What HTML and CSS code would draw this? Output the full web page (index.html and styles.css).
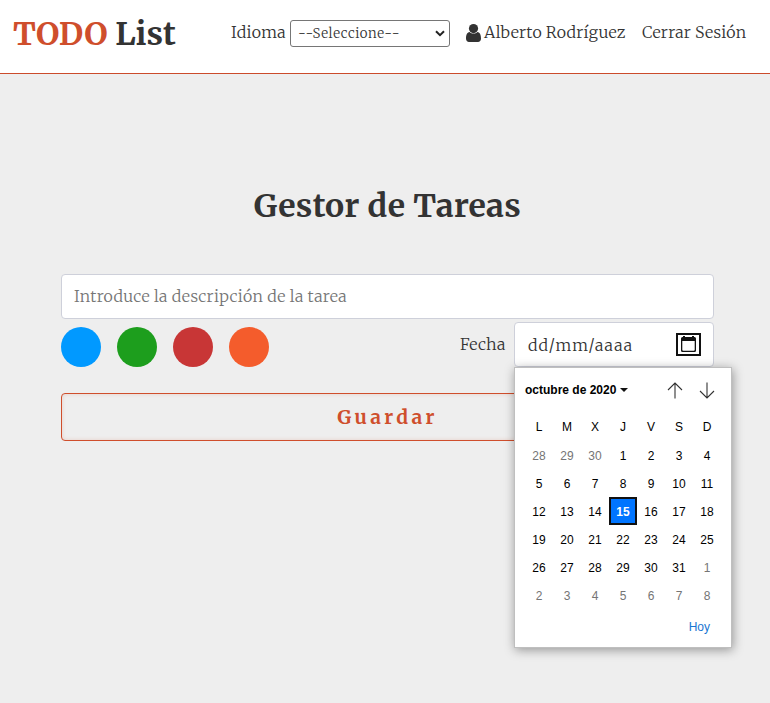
FILE: index.html
```html
<!DOCTYPE html>
<html lang="es">
<head>
<meta charset="utf-8">
<title>TODO List</title>
<link rel="stylesheet" href="styles.css">
</head>
<body>
<header class="header">
  <h1 class="brand"><span class="brand-accent">TODO</span> List</h1>
  <nav class="nav">
    <label class="lang"><span class="lang-label">Idioma</span>
      <span class="select"><span class="select-text">--Seleccione--</span>
        <svg class="chevron" width="10" height="7" viewBox="0 0 10 7"><path d="M1 1.300 5 5.200 9 1.300" fill="none" stroke="#222" stroke-width="2"/></svg>
      </span>
    </label>
    <a class="user"><svg class="user-icon" width="15" height="18" viewBox="0 0 15 18"><path fill="#333" d="M3.600 8C1 8.300 0 11 0 14.600 0 17 1.300 18 3 18h9c1.700 0 3-1 3-3.400 0-3.600-1-6.300-3.600-6.600C10.300 9.100 9 9.600 7.500 9.600S4.700 9.100 3.600 8Z"/><circle cx="7.500" cy="4.600" r="4.600" fill="#333"/></svg><span class="user-name">Alberto Rodríguez</span></a>
    <a class="logout">Cerrar Sesión</a>
  </nav>
</header>
<main class="main">
  <h2 class="title">Gestor de Tareas</h2>
  <form class="form">
    <div class="task-input"><span class="placeholder">Introduce la descripción de la tarea</span></div>
    <div class="options">
      <div class="colors">
        <span class="dot blue"></span><span class="dot green"></span><span class="dot red"></span><span class="dot orange"></span>
      </div>
      <div class="date">
        <span class="date-label">Fecha</span>
        <div class="date-input"><span class="date-text">dd/mm/aaaa</span>
          <span class="date-button"><svg width="21" height="19" viewBox="0 0 21 19"><path fill="#111" fill-rule="evenodd" d="M3 3.500Q3 2 4.500 2H5V1h2v1h7V1h2v1h.5Q18 2 18 3.500v12q0 1.500-1.500 1.500h-12Q3 17 3 15.500ZM4.300 6v8.700q0 1 1 1h10.400q1 0 1-1V6Z"/></svg></span>
          <div class="calendar">
            <div class="cal-head"><strong class="month">octubre de 2020</strong><i class="caret"></i>
              <svg class="arrows" width="48" height="17" viewBox="0 0 48 17"><path d="M8 16.500V1M1 8l7-7 7 7M40 .5V16M33 9l7 7 7-7" fill="none" stroke="#333" stroke-width="1.100"/></svg>
            </div>
            <div class="days">
              <span class="wd">L</span><span class="wd">M</span><span class="wd">X</span><span class="wd">J</span><span class="wd">V</span><span class="wd">S</span><span class="wd">D</span>
              <span class="off">28</span><span class="off">29</span><span class="off">30</span><span>1</span><span>2</span><span>3</span><span>4</span>
              <span>5</span><span>6</span><span>7</span><span>8</span><span>9</span><span>10</span><span>11</span>
              <span>12</span><span>13</span><span>14</span><span class="today">15</span><span>16</span><span>17</span><span>18</span>
              <span>19</span><span>20</span><span>21</span><span>22</span><span>23</span><span>24</span><span>25</span>
              <span>26</span><span>27</span><span>28</span><span>29</span><span>30</span><span>31</span><span class="off">1</span>
              <span class="off">2</span><span class="off">3</span><span class="off">4</span><span class="off">5</span><span class="off">6</span><span class="off">7</span><span class="off">8</span>
            </div>
            <div class="cal-foot">Hoy</div>
          </div>
        </div>
      </div>
    </div>
    <button class="save" type="button">Guardar</button>
  </form>
</main>
</body>
</html>
```
FILE: styles.css
```css
* { box-sizing: border-box; }
body {
  margin: 0;
  height: 703px;
  overflow: hidden;
  background: #eee;
  color: #333;
  font: 300 16px/24px Merriweather, "Liberation Serif", serif;
  letter-spacing: 0.3px;
}
.header {
  display: flex;
  justify-content: space-between;
  height: 74px;
  padding: 0 23px 0 13px;
  background: #fff;
  border-bottom: 1px solid #cb4b2b;
}
.brand, .title { font-weight: 700; white-space: nowrap; }
.brand { margin: 14px 0 0; font-size: 32px; line-height: 40px; letter-spacing: 0; }
.brand-accent { color: #cf4e2c; }
.nav { display: flex; gap: 16px; height: 27px; margin-top: 20px; align-items: center; white-space: nowrap; }
.lang, .user { display: flex; align-items: center; gap: 4px; }
.lang-label { width: 55px; }
.lang-label, .user-name, .logout { padding-bottom: 4px; }
.select {
  display: flex;
  align-items: center;
  justify-content: space-between;
  width: 160px;
  height: 27px;
  padding: 0 4px 0 7px;
  border: 1px solid #767676;
  border-radius: 3px;
  font-size: 13.333px;
  letter-spacing: 0.6px;
  background: #fff;
}
.select-text { padding-top: 1px; }
.user { gap: 3px; width: 160px; }
.user-name, .logout { letter-spacing: 0.22px; }
.user-icon, .chevron { flex: none; }
.user-icon { margin-bottom: 2px; }
.logout { width: 105px; }
.main { padding: 111px 56px 0 61px; }
.title { margin: 0; text-align: center; font-size: 32px; line-height: 42px; }
.form { margin-top: 47px; }
.task-input {
  display: flex;
  align-items: center;
  height: 45px;
  padding: 0 12px 1px;
  background: #fff;
  border: 1px solid #ced0da;
  border-radius: 4px;
  color: #757575;
}
.options { display: flex; justify-content: space-between; margin-top: 3px; }
.colors { display: flex; gap: 16px; padding-top: 5px; }
.dot { width: 40px; height: 40px; border-radius: 50%; }
.blue { background: #0199ff; }
.green { background: #1d9e1d; }
.red { background: #c83636; }
.orange { background: #f45c2c; }
.date { display: flex; }
.date-label { width: 54px; padding-top: 10px; }
.date-text { letter-spacing: 1px; }
.date-input {
  position: relative;
  display: flex;
  align-items: center;
  justify-content: space-between;
  width: 200px;
  height: 45px;
  padding: 0 12px 0 13px;
  background: #fff;
  border: 1px solid #ced0da;
  border-radius: 4px;
}
.date-button { display: flex; width: 25px; height: 23px; border: 2px solid #111; }
.calendar {
  position: absolute;
  top: 44px;
  left: -1px;
  width: 218px;
  height: 281px;
  padding: 12px 10px 0;
  background: #fff;
  border: 1px solid #bfbfbf;
  box-shadow: 1px 2px 10px rgba(0, 0, 0, .38);
  color: #000;
  font: 12px/20px "Liberation Sans", Arial, sans-serif;
  letter-spacing: 0;
}
.cal-head { display: flex; align-items: center; height: 20px; }
.caret { margin-left: 4px; border: 3.5px solid transparent; border-top: 4px solid #111; border-bottom: 0; border-left-width: 4px; border-right-width: 4px; }
.arrows { margin: 1px 6px 0 auto; }
.days { display: grid; grid-template-columns: repeat(7, 28px); grid-auto-rows: 28px; margin-top: 13px; }
.days span { text-align: center; line-height: 30px; }
.days .wd { line-height: 28px; }
.days .off { color: #757575; }
.days .today { background: #0075ff; border: 2px solid #111; color: #fff; font-weight: 700; line-height: 26px; }
.cal-foot { margin: 8px 11px 0 0; text-align: right; color: #1976d2; line-height: 20px; }
.save {
  display: block;
  width: 100%;
  height: 48px;
  margin-top: 26px;
  padding: 0;
  background: transparent;
  border: 1px solid #cf4e2c;
  border-radius: 4px;
  box-shadow: inset 0 0 4px rgba(207, 78, 44, .2);
  color: #cf4e2c;
  font: 700 19.2px/24px Merriweather, "Liberation Serif", serif;
  letter-spacing: 3.4px;
}
```
